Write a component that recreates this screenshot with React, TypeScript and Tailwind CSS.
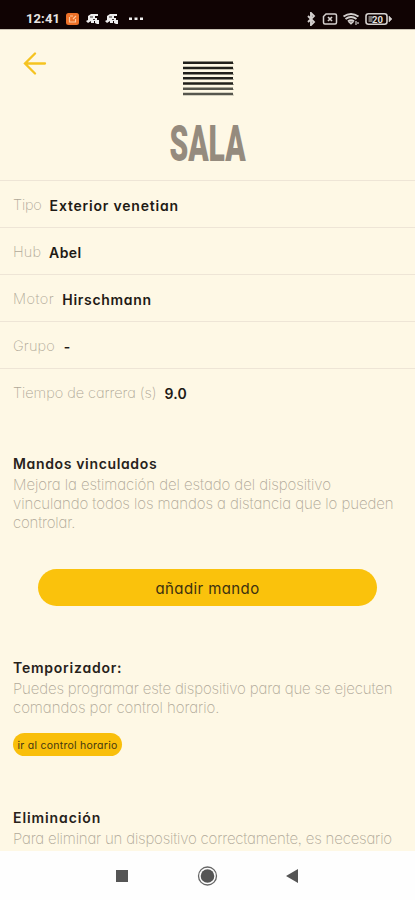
import type { ReactNode } from "react";

const details = [
  { label: "Tipo", value: "Exterior venetian", gap: "gap-[8px]", lt: "tracking-[-0.2px]", vt: "tracking-[0.8px]" },
  { label: "Hub", value: "Abel", gap: "gap-[8px]", lt: "tracking-[0.1px]", vt: "tracking-[0.4px]" },
  { label: "Motor", value: "Hirschmann", gap: "gap-[8px]", lt: "tracking-[0.5px]", vt: "tracking-[0.7px]" },
  { label: "Grupo", value: "-", gap: "gap-[9px]", lt: "tracking-[0.1px]", vt: "tracking-normal" },
  { label: "Tiempo de carrera (s)", value: "9.0", gap: "gap-[8px]", lt: "tracking-[-0.04px]", vt: "tracking-[0.1px]" },
];

function StatusBar() {
  return (
    <header className="flex h-[29px] shrink-0 items-start bg-[#100303] pl-[26px] pr-[22px] pt-[12px] text-[#e8e4e2]">
      <span className="w-[40px] font-[Roboto] text-[13px] leading-[14px] font-bold tracking-[0.1px]">12:41</span>
      <svg className="mt-px" width="80" height="13" viewBox="0 0 80 13" fill="none">
        <rect x="0" y="0" width="13" height="12" rx="2.5" fill="#ed7128" />
        <path d="M4 3h3M3.5 4v5h6V6M7 6l3-3" stroke="#ffc79c" strokeWidth="1.2" />
        {[20, 39].map((x) => (
          <g key={x} transform={`translate(${x} 0)`} fill="#eee">
            <path d="M2 3 5 1h7v2H9v2h2v3H8v2H5V8L2 10 0 8l2-1Z" />
            <path d="M9 7h4v4h-2l-2-1Z" />
            <path d="M4 4h3M7 6.500h2" stroke="#100303" strokeWidth=".8" />
          </g>
        ))}
        <path d="M63 4.500h3v2.400h-3zM68.500 4.500h3v2.400h-3zM74 4.500h3v2.400h-3z" fill="#eee" />
      </svg>
      <svg className="ml-auto" width="88" height="14" viewBox="0 0 88 14" fill="none" stroke="#d4d0ce">
        <path d="m3 4 6 6-3 3V1l3 3-6 6" strokeWidth="1.900" />
        <path d="M21 2h9q1.500 0 1.500 1.500v7Q31.500 12 30 12h-10q-1.500 0-1.500-1.500v-6Z" strokeWidth="1.500" />
        <path d="m23 5 4 4m0-4-4 4" strokeWidth="1.700" />
        <path d="M38.500 4.500q7.500-5 15 0M40.500 7q5.500-4 11 0M43 9.300q3-2.200 6 0" strokeWidth="2" />
        <path d="m44 10 2 2 2-2ZM51 9v4m2-3v2" strokeWidth="1.200" />
        <rect x="61" y="1.800" width="21" height="10.500" rx="2.500" strokeWidth="1.600" />
        <path d="m84 4 3 3-3 3Z" fill="#d4d0ce" strokeWidth=".5" />
        <rect x="63.500" y="4" width="4" height="6" fill="#77716f" stroke="none" />
        <text x="67" y="10.500" fill="#e4e0de" stroke="none" fontFamily="Roboto, sans-serif" fontWeight="700" fontSize="9.500">20</text>
      </svg>
    </header>
  );
}

function Heading({ children, className }: { children: ReactNode; className: string }) {
  return <h2 className={`text-[14px] leading-[20px] font-semibold whitespace-nowrap text-[#27221b] ${className}`}>{children}</h2>;
}

function Line({ children, className }: { children: ReactNode; className: string }) {
  return (
    <span className="block">
      <span className={`inline-block whitespace-nowrap ${className}`}>{children}</span>
    </span>
  );
}

export default function App() {
  return (
    <div className="flex h-[900px] w-[415px] flex-col overflow-hidden bg-[#fef8e5] font-[Inter,'Liberation_Sans',sans-serif] [font-feature-settings:'cv11','ss03']">
      <StatusBar />
      <main className="flex h-[822px] shrink-0 flex-col overflow-hidden border-t border-[#c8c2b4]">
        <div className="relative flex h-[150px] shrink-0 flex-col items-center">
          <button className="absolute top-[22px] left-[23px]" aria-label="Volver">
            <svg width="24" height="24" viewBox="0 0 24 24" fill="none" stroke="#f5c321" strokeWidth="2.300" strokeLinecap="round">
              <path d="M22 11.500H2M12 1.500l-10 10 10 10" />
            </svg>
          </button>
          <svg className="mt-[30px]" width="52" height="37" viewBox="0 0 52 37">
            {[1.5, 6.7, 11.9, 17.1, 22.3, 27.5, 32.7].map((y, i) => (
              <path key={y} d={`M1 ${y}h50v1.800l1 .7H1Z`} fill={i < 5 ? "#21201b" : "#56564d"} />
            ))}
          </svg>
          <h1 className="mt-[22px] origin-center scale-x-[0.6] font-[Roboto] text-[50px] leading-[50px] font-black text-[#958b7e]">SALA</h1>
        </div>
        <div className="shrink-0">
          {details.map((d) => (
            <div key={d.label} className={`flex h-[47px] items-center border-t border-[#eee5d6] pt-[2px] pl-[13px] text-[14.500px] whitespace-nowrap ${d.gap}`}>
              <span className={`font-extralight text-[#b0a898] ${d.lt}`}>{d.label}</span>
              <span className={`text-[14px] font-semibold text-[#1f1b15] ${d.vt}`}>{d.value}</span>
            </div>
          ))}
        </div>
        <section className="mt-[39px] shrink-0 pl-[13px]">
          <Heading className="tracking-[0.650px]">Mandos vinculados</Heading>
          <p className="mt-px text-[15px] leading-[19px] font-extralight text-[#b0a898]">
            <Line className="tracking-[-0.070px]">Mejora la estimación del estado del dispositivo</Line>
            <Line className="tracking-[-0.090px]">vinculando todos los mandos a distancia que lo pueden</Line>
            <Line className="tracking-[-0.200px]">controlar.</Line>
          </p>
        </section>
        <button className="mt-[37px] ml-[38px] h-[37px] w-[339px] shrink-0 rounded-full bg-[#fac20c] pt-[3px] text-[15px] tracking-[0.400px] text-[#3d3110]">añadir mando</button>
        <section className="mt-[52px] shrink-0 pl-[13px]">
          <Heading className="tracking-[0.760px]">Temporizador:</Heading>
          <p className="mt-px text-[15px] leading-[19px] font-extralight text-[#b0a898]">
            <Line className="tracking-[-0.160px]">Puedes programar este dispositivo para que se ejecuten</Line>
            <Line className="tracking-[-0.060px]">comandos por control horario.</Line>
          </p>
          <button className="mt-[16px] flex h-[23px] w-[109px] items-center justify-center rounded-full bg-[#f9bf0b] pt-[2px] text-[10.500px] tracking-[0.260px] whitespace-nowrap text-[#453711]">ir al control horario</button>
        </section>
        <section className="mt-[52px] shrink-0 pl-[13px]">
          <Heading className="tracking-[0.900px]">Eliminación</Heading>
          <p className="mt-px text-[15px] leading-[19px] font-extralight text-[#b0a898]">
            <Line className="tracking-[-0.200px]">Para eliminar un dispositivo correctamente, es necesario</Line>
          </p>
        </section>
      </main>
      <nav className="flex grow items-center bg-[#fefefe] pl-[114px]">
        <svg width="190" height="22" viewBox="0 0 190 22" fill="#555">
          <path d="M2 5h12v12H2zM184 4v14l-12-7Z" />
          <circle cx="93.500" cy="11" r="6.800" />
          <circle cx="93.500" cy="11" r="9" fill="none" stroke="#666" strokeWidth="1.300" />
        </svg>
      </nav>
    </div>
  );
}
